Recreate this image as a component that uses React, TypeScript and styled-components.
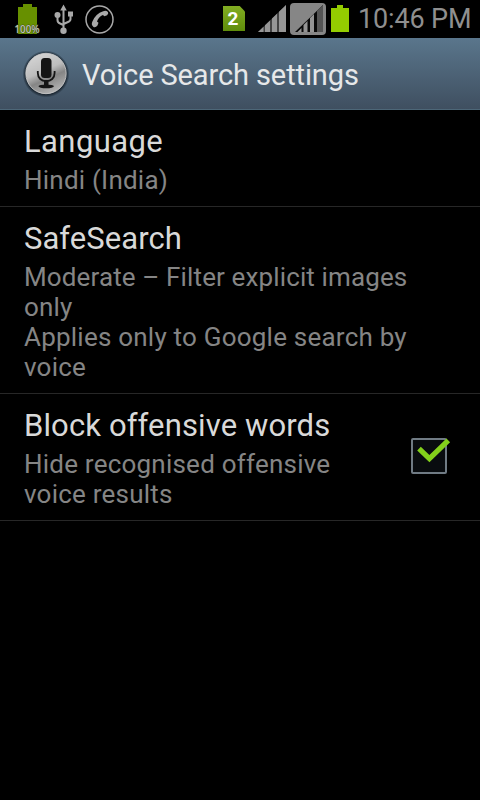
import { useState } from "react";
import styled, { createGlobalStyle } from "styled-components";

const GlobalStyle = createGlobalStyle`
  * {
    box-sizing: border-box;
  }
  body {
    margin: 0;
    background: #000;
    font-family: Roboto, "Noto Sans", sans-serif;
  }
`;

const Screen = styled.div`
  width: 480px;
  height: 800px;
  overflow: hidden;
  background: #000;
`;

const StatusBar = styled.div`
  height: 38px;
  display: flex;
  justify-content: space-between;
  padding: 0 10px 0 12px;
`;

const StatusGroup = styled.div`
  display: flex;
  align-items: flex-start;
`;

const Clock = styled.span`
  width: 112px;
  margin-left: 7px;
  font-size: 27px;
  line-height: 38px;
  letter-spacing: -0.15px;
  white-space: nowrap;
  color: #8f8f8f;
`;

const Header = styled.header`
  height: 72px;
  display: flex;
  align-items: center;
  padding-left: 22px;
  background: linear-gradient(#5a768c, #3f4f60);
  border-bottom: 1px solid #4d6778;
`;

const HeaderTitle = styled.h1`
  margin: 2px 0 0 12px;
  font-size: 29px;
  font-weight: 400;
  line-height: 36px;
  letter-spacing: -0.11px;
  white-space: nowrap;
  color: #e6e8e9;
`;

const Row = styled.div`
  display: flex;
  align-items: center;
  justify-content: space-between;
  padding: 14px 28px 11px 24px;
  border-bottom: 1px solid #272727;
`;

const RowText = styled.div<{ $width: number }>`
  width: ${(props) => props.$width}px;
`;

const Title = styled.h2<{ $spacing: number }>`
  margin: 0 0 5px;
  font-size: 31px;
  font-weight: 400;
  line-height: 36px;
  letter-spacing: ${(props) => props.$spacing}px;
  white-space: nowrap;
  color: #d9d9d9;
`;

const Summary = styled.p<{ $spacing?: number }>`
  margin: 0;
  font-size: 26px;
  line-height: 30px;
  letter-spacing: ${(props) => props.$spacing ?? 0.22}px;
  white-space: pre-line;
  color: #858585;
`;

const CheckButton = styled.button`
  display: block;
  margin-bottom: 8px;
  padding: 0;
  border: 0;
  background: none;
  line-height: 0;
`;

const SimIcon = styled.div`
  width: 22px;
  height: 25px;
  margin: 6px 12px 0 0;
  display: flex;
  align-items: center;
  justify-content: center;
  padding-right: 2px;
  background: linear-gradient(#82ad22, #5f8c0b);
  clip-path: polygon(0 0, 76% 0, 100% 22%, 100% 100%, 0 100%);
  color: #fff;
  font-size: 19px;
  font-weight: 700;
`;

function ChargeIcon() {
  return (
    <svg width="30" height="38" viewBox="12 0 30 38">
      <path d="M23 4h9v3h5v27H18V7h5z" fill="#679000" />
      <text
        x="14.500"
        y="32.500"
        textLength="25"
        lengthAdjust="spacingAndGlyphs"
        fontFamily="Noto Sans"
        fontSize="10"
        fontWeight="500"
        fill="#c4c6c0"
        stroke="#3c4a18"
        strokeWidth="0.800"
        paintOrder="stroke"
      >
        100%
      </text>
    </svg>
  );
}

function UsbIcon() {
  return (
    <svg width="42" height="38" viewBox="42 0 42 38">
      <g fill="none" stroke="#a9a9a9" strokeWidth="2">
        <path d="M63.5 8v22M57.5 16v4q0 2.500 2.500 3.500l3.500 1.500M70.500 13v6q0 2-2.500 3l-4.500 2" />
      </g>
      <g fill="#a9a9a9">
        <path d="M63.500 4.500l3.300 6h-6.600zM68 11.500h5v5h-5z" />
        <circle cx="57.500" cy="15" r="3" />
        <circle cx="63.500" cy="30.800" r="3.200" />
      </g>
    </svg>
  );
}

function CallIcon() {
  return (
    <svg width="32" height="38" viewBox="84 0 32 38">
      <circle cx="99.500" cy="19.500" r="13.500" fill="none" stroke="#a9a9a9" strokeWidth="1.500" />
      <path
        d="M103.200 11.300q2.800-1.300 4.700.8 1 1.600-.8 3.200l-2.700 1-1.500-1.400q-4.200 1.500-5.900 6.500l1.500 1.300-1 2.800q-1.800 2.300-4 1.500-2.600-2-1.200-5.200 3.300-8.200 10.900-10.500z"
        fill="#a9a9a9"
      />
    </svg>
  );
}

function SignalIcon() {
  return (
    <svg width="32" height="38" viewBox="257 0 32 38">
      <path d="M258 32l28-27v27z" fill="#424242" />
      <path
        d="M258 32l5.500-5.300V32zM265 32v-6.700l5-4.800V32zM272 32V18.500l5-4.800V32zM279 32V11.700L284 6.900 286 5v27z"
        fill="#969696"
      />
    </svg>
  );
}

function SecondSignalIcon() {
  return (
    <svg width="38" height="38" viewBox="289 0 38 38">
      <rect x="290" y="3" width="36" height="32" rx="4" fill="#868686" />
      <path d="M295 32l28-27v27z" fill="#090909" />
      <path d="M317 10.800L323 5v27h-6z" fill="#555" />
      <path d="M297.500 32l4-4v4zM303.500 32v-7l4-4V32zM310 32V18l4-4V32z" fill="#949494" />
    </svg>
  );
}

function BatteryIcon() {
  return (
    <svg width="24" height="38" viewBox="327 0 24 38">
      <path d="M337 5h6v3h6v24h-18V8h6z" fill="#94cc00" />
    </svg>
  );
}

function VoiceIcon() {
  return (
    <svg width="48" height="50" viewBox="22 49 48 50">
      <defs>
        <linearGradient id="disc" x1="0.2" y1="0" x2="0.65" y2="1">
          <stop offset="0" stopColor="#d6d6d6" />
          <stop offset="0.45" stopColor="#bdbdbd" />
          <stop offset="0.65" stopColor="#858585" />
          <stop offset="1" stopColor="#b5b5b5" />
        </linearGradient>
        <radialGradient id="halo">
          <stop offset="0.86" stopColor="#17222c" />
          <stop offset="1" stopColor="#17222c" stopOpacity="0" />
        </radialGradient>
      </defs>
      <circle cx="46" cy="74" r="23.500" fill="url(#halo)" />
      <circle cx="46" cy="73.500" r="20.200" fill="url(#disc)" stroke="#d2d2d2" strokeWidth="0.800" />
      <rect x="41" y="58" width="10.500" height="20" rx="3.500" fill="#151515" />
      <path d="M37.800 71v2c0 5 3.600 8.200 8.400 8.200s8.400-3.200 8.400-8.200v-2" fill="none" stroke="#151515" strokeWidth="1.800" />
      <path d="M44 80h4.500v5H44z" fill="#151515" />
      <ellipse cx="46.200" cy="86.300" rx="7.700" ry="1.900" fill="#151515" />
    </svg>
  );
}

function CheckIcon({ checked }: { checked: boolean }) {
  return (
    <svg width="42" height="42" viewBox="410 434 42 42">
      <rect x="412" y="439" width="34" height="34" rx="1" fill="#090c0f" stroke="#707b84" strokeWidth="2" />
      {checked && (
        <path d="M419 448.600l10.400 10 18.900-18.300" fill="none" stroke="#83d01b" strokeWidth="5.200" />
      )}
    </svg>
  );
}

function App() {
  const [blocked, setBlocked] = useState(true);
  return (
    <Screen>
      <GlobalStyle />
      <StatusBar>
        <StatusGroup>
          <ChargeIcon />
          <UsbIcon />
          <CallIcon />
        </StatusGroup>
        <StatusGroup>
          <SimIcon>2</SimIcon>
          <SignalIcon />
          <SecondSignalIcon />
          <BatteryIcon />
          <Clock>10:46 PM</Clock>
        </StatusGroup>
      </StatusBar>
      <Header>
        <VoiceIcon />
        <HeaderTitle>Voice Search settings</HeaderTitle>
      </Header>
      <Row>
        <RowText $width={420}>
          <Title $spacing={0.4}>Language</Title>
          <Summary>Hindi (India)</Summary>
        </RowText>
      </Row>
      <Row>
        <RowText $width={420}>
          <Title $spacing={0.05}>SafeSearch</Title>
          <Summary $spacing={0.13}>{"Moderate – Filter explicit images\nonly"}</Summary>
          <Summary>{"Applies only to Google search by\nvoice"}</Summary>
        </RowText>
      </Row>
      <Row>
        <RowText $width={350}>
          <Title $spacing={0.12}>Block offensive words</Title>
          <Summary>{"Hide recognised offensive\nvoice results"}</Summary>
        </RowText>
        <CheckButton onClick={() => setBlocked(!blocked)}>
          <CheckIcon checked={blocked} />
        </CheckButton>
      </Row>
    </Screen>
  );
}

export default App;
